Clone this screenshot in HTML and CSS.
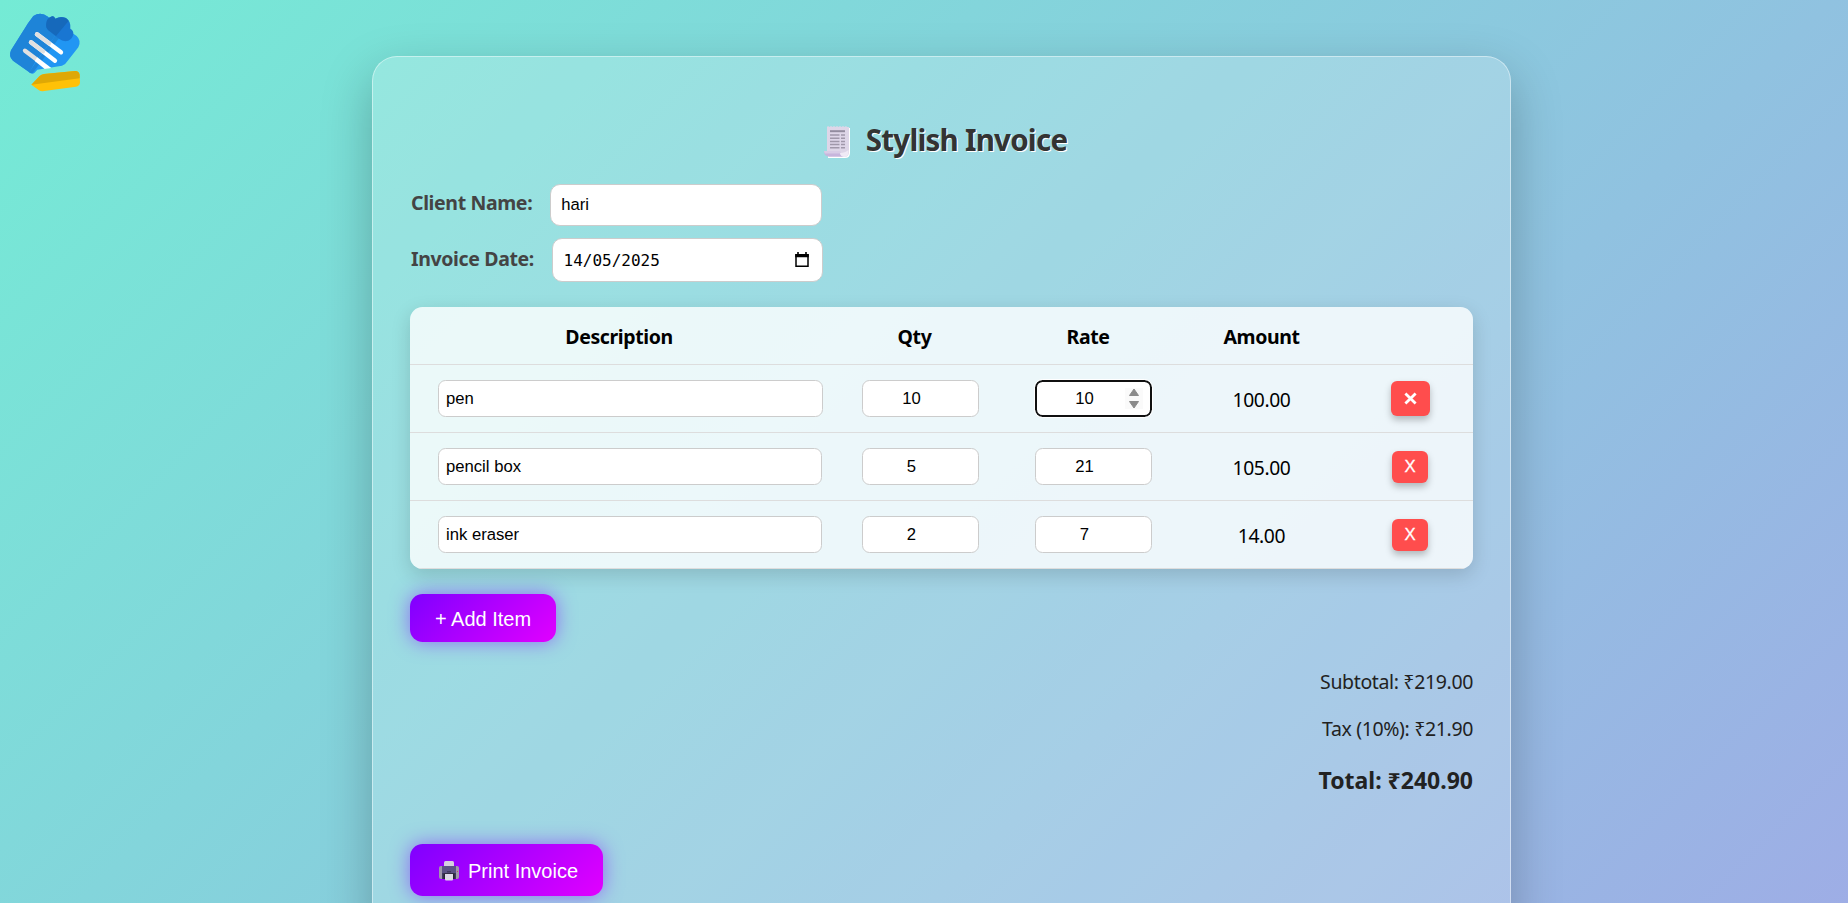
FILE: index.html
```html
<!DOCTYPE html>
<html lang="en">
<head>
<meta charset="utf-8">
<title>Stylish Invoice</title>
<link rel="stylesheet" href="styles.css">
</head>
<body>
<div class="page">
  <svg class="logo" viewBox="0 0 360 330" aria-hidden="true">
    <path fill="#2196f3" d="M100 48Q122 34 144 50L230 108Q245 122 235 142L202 184Q196 195 186 197L112 209L103 219Q96 224 88 217L39 182Q25 170 33 151L84 70Z"/>
    <path fill="#1e84d8" d="M100 48Q122 34 144 50L172 98L103 190L88 217L39 182Q25 170 33 151L84 70Z"/>
    <path fill="#1e84d8" d="M172 98L87 217Q96 224 103 212L184 105Z"/>
    <path fill="#1976d2" d="M139 69Q141 54 153 50Q161 46 166 56Q180 48 196 53Q213 61 211 86Q221 91 220 103Q216 123 196 124Q186 123 177 116L145 91Q136 83 139 69Z"/>
    <path fill="#1669bb" d="M139 69Q141 54 153 50Q161 46 166 56Q180 48 198 54L206 62L168 108L145 91Q136 83 139 69Z"/>
    <g stroke-width="13" stroke-linecap="round">
      <path stroke="#fff" d="M111 103L183 157M93 127L165 182"/>
      <path stroke="#e0e0e0" d="M111 103L147 130M93 127L129 154"/>
      <path stroke="#e0e0e0" d="M75 152L108 177"/>
    </g>
    <path fill="#fff" d="M112 172L154 204L134 207L104 183Z"/>
    <path fill="#ffc107" d="M94 254L119 228Q124 223 132 222L225 213Q236 212 239 224L240 248Q239 257 228 260L132 273Q123 275 116 270Z"/>
    <path fill="#dea806" d="M94 254L119 228Q124 223 132 222L225 213Q236 212 239 224L239 235Z"/>
  </svg>

  <main class="card">
    <h1 class="title">
      <svg class="receipt" viewBox="0 0 27 32" aria-hidden="true">
        <path fill="#fff" d="M5 2H27V27Q27 32 22 32H5Z"/>
        <path fill="#ded6e8" d="M4 1L5 0 6.500 1 8 0 9.500 1 11 0 12.500 1 14 0 15.500 1 17 0 18.500 1 20 0 21.500 1 23 0 24 1L26 1V26Q26 31 21 31L4 26Z"/>
        <path fill="#c7b5dc" d="M1 25H17Q17 30 22 30.700H6Q1 30 1 25Z"/>
        <path fill="#d8cce6" d="M1 25H17V27.500H1.800Z"/>
        <path fill="#f0eaf6" d="M17 27Q22 27 25.500 24V26Q25.500 31 21 31Q17 30 17 27Z"/>
        <path stroke="#938c9f" stroke-width="2" d="M7 5.200H22"/>
        <path stroke="#a098aa" stroke-width="1.500" d="M7 9H16.500M18 9H22M7 12.300H16.500M18 12.300H22M7 15.500H16.500M18 15.500H22M7 18.600H16.500M18 18.600H22M7 21.800H16.500M18 21.800H22"/>
      </svg>
      <span>Stylish Invoice</span>
    </h1>

    <div class="field">
      <span class="label label-client">Client Name:</span>
      <span class="box client">hari</span>
    </div>
    <div class="field field-date">
      <span class="label label-date">Invoice Date:</span>
      <span class="box date"><span>14/05/2025</span>
        <svg class="calendar" viewBox="0 0 14 16" aria-hidden="true"><path d="M1 3H13V14.300H1Z" fill="none" stroke="#000" stroke-width="1.500"/><path d="M.2 2H13.800V5.300H.2ZM2.200 0H3.800V3H2.200ZM10.200 0H11.800V3H10.200Z"/></svg>
      </span>
    </div>

    <div class="table">
      <div class="row head"><span>Description</span><span>Qty</span><span>Rate</span><span>Amount</span><span></span></div>
      <div class="row">
        <span class="cell"><span class="input desc wide">pen</span></span>
        <span class="cell"><span class="input num">10</span></span>
        <span class="cell"><span class="input num focused"><span>10</span>
          <svg class="spinner" viewBox="0 0 18 21" aria-hidden="true"><path fill="#fafafa" d="M0 0H18V21H0Z"/><path fill="#8b8b8b" stroke="#8b8b8b" stroke-linejoin="round" d="M9 1L13.500 7.500H4.500ZM9 20L13.500 13.500H4.500Z"/></svg></span></span>
        <span class="amount">100.00</span>
        <span class="action"><span class="remove hover"><svg viewBox="0 0 14 14" aria-hidden="true"><path d="M1.500 1.500L12.500 12.500M12.500 1.500L1.500 12.500"/></svg></span></span>
      </div>
      <div class="row">
        <span class="cell"><span class="input desc">pencil box</span></span>
        <span class="cell"><span class="input num">5</span></span>
        <span class="cell"><span class="input num">21</span></span>
        <span class="amount">105.00</span>
        <span class="action"><span class="remove">X</span></span>
      </div>
      <div class="row">
        <span class="cell"><span class="input desc">ink eraser</span></span>
        <span class="cell"><span class="input num">2</span></span>
        <span class="cell"><span class="input num">7</span></span>
        <span class="amount">14.00</span>
        <span class="action"><span class="remove">X</span></span>
      </div>
    </div>

    <div class="button add">+ Add Item</div>

    <div class="totals">
      <div class="subtotal">Subtotal: ₹219.00</div>
      <div class="tax">Tax (10%): ₹21.90</div>
      <div class="total">Total: ₹240.90</div>
    </div>

    <div class="button print">
      <svg class="printer" viewBox="0 0 20 20" aria-hidden="true">
        <rect x="5" y="0" width="10" height="8" rx="1.500" fill="#d5cfdf"/>
        <rect x="0" y="5" width="20" height="13" rx="2" fill="#9f97ab"/>
        <path fill="#5c5285" d="M3 5H17V18H3Z"/>
        <path fill="#40395f" d="M3 12H17V18H3ZM8 10H12V11.500H8Z"/>
        <path fill="#282433" d="M4.500 12.500H15.500V18H4.500Z"/>
        <path fill="#ded9e6" d="M6 13H14V18.500Q14 19.500 13 19.500H7Q6 19.500 6 18.500Z"/>
        <path fill="#d03b70" d="M18 10H19V11H18Z"/>
      </svg>
      <span>Print Invoice</span>
    </div>
  </main>
</div>
</body>
</html>
```
FILE: styles.css
```css
* { box-sizing: border-box; }
body {
  margin: 0;
  font-family: "Noto Sans", "Open Sans", sans-serif;
}
.page {
  position: relative;
  height: 903px;
  overflow: hidden;
  padding: 56px 337px 0 372px;
  background: linear-gradient(135deg, #74ebd5, #9face6) 0 0 / 100% 970px no-repeat;
}
.logo { position: absolute; left: 0; top: 0; width: 120px; height: 110px; fill: none; }
.card {
  height: 878px;
  padding: 63px 37px 0;
  border: 1px solid rgba(255, 255, 255, .45);
  border-radius: 25px;
  background: rgba(255, 255, 255, .2);
  box-shadow: 0 19px 50px rgba(0, 0, 0, .25);
}
.title {
  display: flex;
  align-items: center;
  justify-content: center;
  gap: 16px;
  height: 40px;
  margin: 0 0 24px 7px;
  font-size: 29.500px;
  line-height: 40px;
  letter-spacing: -.75px;
  color: #333;
  text-shadow: 1px 1px 0 #fff;
}
.receipt { width: 27px; height: 32px; margin-top: 3px; fill: none; }
.field { display: flex; height: 41.500px; }
.field-date { height: 43.600px; margin: 13px 0 25px; }
.label {
  padding-left: 1px;
  font-size: 19.500px;
  font-weight: 700;
  line-height: 37px;
  letter-spacing: -.37px;
  color: #444;
}
.label-client { width: 140.300px; }
.label-date { width: 141.500px; line-height: 39px; }
.box {
  display: flex;
  align-items: center;
  width: 271.250px;
  padding: 0 10px;
  border: 1px solid #ccc;
  border-radius: 10px;
  background: #fff;
  color: #000;
}
.client { font: 16.670px "Liberation Sans", Arial, sans-serif; }
.date {
  justify-content: space-between;
  margin-top: -1px;
  padding: 1px 13px 0 11px;
  font: 16px "DejaVu Sans Mono", monospace;
}
.calendar { width: 14px; height: 16px; }
.table {
  border-radius: 12.500px;
  overflow: hidden;
  background: rgba(255, 255, 255, .8);
  box-shadow: 0 6px 19px rgba(0, 0, 0, .15);
}
.row {
  display: grid;
  grid-template-columns: 418px 173px 174px 173px 1fr;
  align-items: center;
  height: 68px;
  border-bottom: 1px solid #ddd;
}
.head {
  height: 58px;
  padding-top: 1px;
  font-size: 19.500px;
  font-weight: 700;
  letter-spacing: -.4px;
  text-align: center;
}
.cell { display: flex; }
.input {
  display: flex;
  align-items: center;
  height: 37px;
  border: 1px solid #ccc;
  border-radius: 7.500px;
  background: #fff;
  font: 16.670px "Liberation Sans", Arial, sans-serif;
}
.desc { flex: none; width: 384px; margin-left: 28px; padding-left: 7px; }
.wide { width: 385px; }
.num {
  position: relative;
  flex: none;
  width: 117px;
  margin-left: 34px;
  padding-right: 18px;
  justify-content: center;
}
.focused { border: 2px solid #101010; outline: 1px solid #fff; }
.spinner { position: absolute; right: 7px; top: 6px; width: 18px; height: 21px; }
.amount { padding-top: 1px; text-align: center; font-size: 19.300px; letter-spacing: -.4px; }
.action { display: flex; justify-content: center; padding-right: 1px; }
.remove {
  display: flex;
  align-items: center;
  justify-content: center;
  width: 36px;
  height: 32px;
  margin-top: 1px;
  border-radius: 6px;
  background: #ff4d4d;
  box-shadow: 0 4px 7px rgba(0, 0, 0, .25);
  color: #fff;
  font: 16.670px "Liberation Sans", Arial, sans-serif;
  -webkit-text-stroke: .3px #fff;
}
.hover { width: 39px; height: 35px; margin-top: 0; }
.hover svg { width: 13px; height: 13px; fill: none; stroke: #fff; stroke-width: 3; }
.button {
  display: flex;
  align-items: center;
  justify-content: center;
  padding-top: 2px;
  border-radius: 12.500px;
  background: linear-gradient(135deg, #7f00ff, #e100ff);
  box-shadow: 0 0 19px rgba(127, 0, 255, .5);
  color: #fff;
  font: 20px "Liberation Sans", Arial, sans-serif;
}
.add { width: 146px; height: 48px; margin-top: 25px; }
.totals {
  display: flex;
  flex-direction: column;
  align-items: flex-end;
  margin-top: 26px;
  color: #222;
  font-size: 19.500px;
  line-height: 28px;
  letter-spacing: -.36px;
}
.tax { margin-top: 19px; }
.total { margin-top: 23px; font-size: 23px; font-weight: 700; letter-spacing: 0; }
.print { gap: 9px; width: 193px; height: 52px; margin-top: 50px; padding-left: 4px; }
.printer { width: 20px; height: 20px; }
```
